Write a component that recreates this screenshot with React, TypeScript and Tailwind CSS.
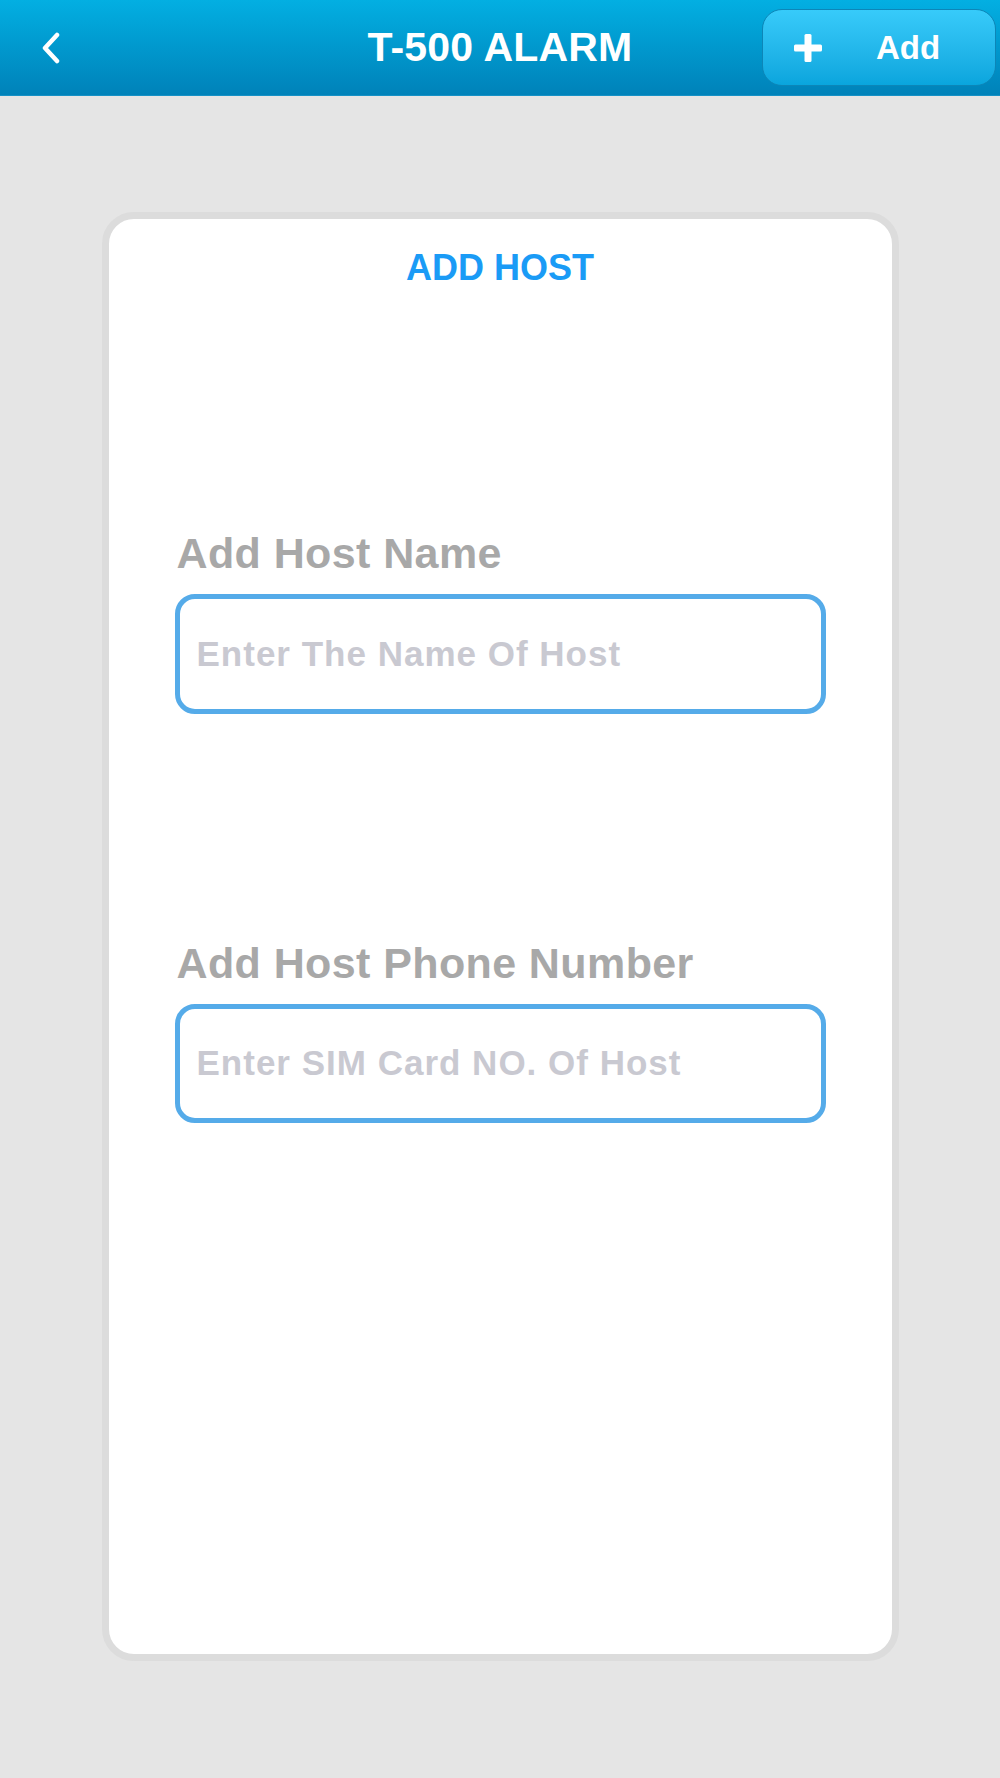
import React from "react";

const font = { fontFamily: '"Liberation Sans", Arial, sans-serif' };

const Field = ({ label, placeholder, labelGap, boxHeight }: { label: string; placeholder: string; labelGap: string; boxHeight: string }) => (
  <div className={labelGap}>
    <div className="text-[43px] leading-[43px] font-bold text-[#a8a8a8] pl-[2px] tracking-[0.4px]">{label}</div>
    <div className={`mt-[19px] ${boxHeight} border-[5px] border-[#55abe9] rounded-[20px] flex items-center px-[17px]`}>
      <input
        type="text"
        placeholder={placeholder}
        className="w-full bg-transparent outline-none text-[35px] font-bold tracking-[1px] text-gray-600 placeholder:text-[#c9c9d1]"
        style={font}
      />
    </div>
  </div>
);

export default function App() {
  return (
    <div className="min-h-[1778px] bg-[#e5e5e5]" style={font}>
      <header className="h-[96px] grid grid-cols-[1fr_auto_1fr] items-center bg-gradient-to-b from-[#03afe2] to-[#0082b9] border-b border-[#1591c6]">
        <div className="pl-[40px] flex items-center">
          <svg width="22" height="32" viewBox="0 0 22 32" fill="none">
            <polyline points="17,3 5,16 17,29" stroke="white" strokeWidth="4.5" strokeLinecap="round" strokeLinejoin="round" />
          </svg>
        </div>
        <h1 className="text-[41px] leading-none font-bold text-white tracking-[0.2px]">T-500 ALARM</h1>
        <div className="flex justify-end pr-[4px]">
          <button className="w-[234px] h-[77px] rounded-[20px] border border-[#0c86b8] bg-gradient-to-b from-[#37cbfa] to-[#09a5dd] flex items-center pl-[30px] text-white">
            <svg width="30" height="30" viewBox="0 0 30 30">
              <rect x="11.5" y="1" width="7" height="28" rx="1.5" fill="white" />
              <rect x="1" y="11.5" width="28" height="7" rx="1.5" fill="white" />
            </svg>
            <span className="ml-[53px] text-[33px] font-bold leading-none">Add</span>
          </button>
        </div>
      </header>

      <main className="pt-[116px] pb-[117px]">
        <section className="mx-auto w-[797px] h-[1449px] bg-white border-[7px] border-[#dcdcdc] rounded-[32px] px-[66px]">
          <h2 className="mt-[31px] text-center text-[36px] leading-[36px] font-bold text-[#1a9bf6]">ADD HOST</h2>
          <Field label="Add Host Name" placeholder="Enter The Name Of Host" labelGap="mt-[246px]" boxHeight="h-[120px]" />
          <Field label="Add Host Phone Number" placeholder="Enter SIM Card NO. Of Host" labelGap="mt-[228px]" boxHeight="h-[119px]" />
        </section>
      </main>
    </div>
  );
}
